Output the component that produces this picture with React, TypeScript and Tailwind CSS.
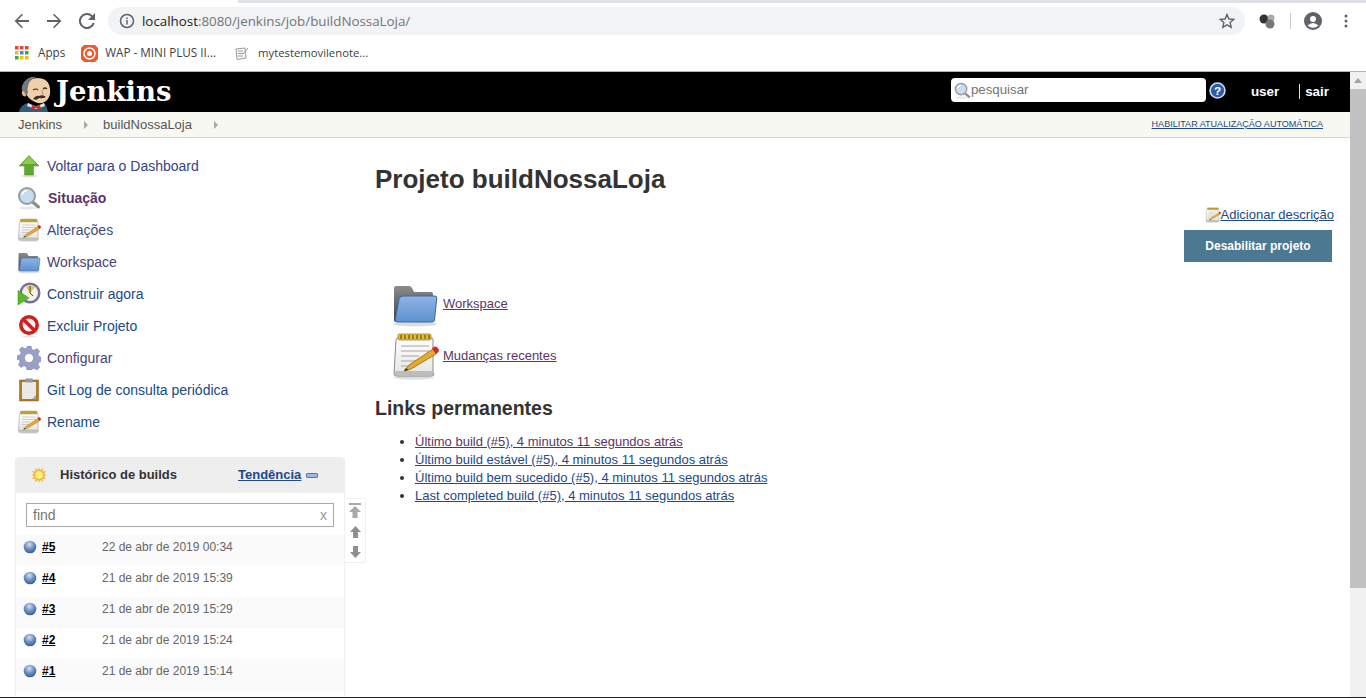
import React from "react";

const Back = ({ flip = false }: { flip?: boolean }) => (
  <svg width="16" height="16" viewBox="0 0 16 16" className={flip ? "-scale-x-100" : ""}>
    <path d="M15 7H3.800l5.200-5.200L7.900.7 0.600 8l7.300 7.300 1.100-1.100L3.800 9H15z" fill="#5f6368" />
  </svg>
);

const Folder = ({ s }: { s: number }) => (
  <svg width={s} height={s} viewBox="0 0 48 48">
    <defs>
      <linearGradient id={`fb${s}`} x1="0" y1="0" x2="0" y2="1"><stop offset="0" stopColor="#8db4e4" /><stop offset="1" stopColor="#5f90cf" /></linearGradient>
      <linearGradient id={`fg${s}`} x1="0" y1="0" x2="0" y2="1"><stop offset="0" stopColor="#8c8c8c" /><stop offset="1" stopColor="#3f3f3f" /></linearGradient>
    </defs>
    <ellipse cx="24" cy="44" rx="22" ry="2.500" fill="#00000022" />
    <path d="M3 8q0-2 2-2h13q2 0 3 2l2 4h17q2 0 2 2v4H12L8 42H5q-2 0-2-2z" fill={`url(#fg${s})`} />
    <path d="M12 16h32q2 0 1.800 2l-2.300 22q-.2 2-2 2H6q-2 0-1.800-2L8 19q.5-3 4-3z" fill={`url(#fb${s})`} stroke="#3a66a5" strokeWidth="1" />
  </svg>
);

const Notepad = ({ s }: { s: number }) => (
  <svg width={s} height={s} viewBox="0 0 48 48">
    <defs>
      <linearGradient id={`np${s}`} x1="0" y1="0" x2="0" y2="1"><stop offset="0" stopColor="#ffffff" /><stop offset="1" stopColor="#e4e4e0" /></linearGradient>
    </defs>
    <ellipse cx="23" cy="45.500" rx="20" ry="2" fill="#00000022" />
    <path d="M5 8q0-2 2-2h33q2 0 2 2v32l1 2q0 2-3 2H6q-3 0-3-2z" fill={`url(#np${s})`} stroke="#8a8a8a" />
    <rect x="3.500" y="39" width="39" height="4.500" rx="2" fill="#bdbdbd" />
    <rect x="7" y="2" width="33" height="6" rx="1.500" fill="#e0bd3c" stroke="#8f7a1e" strokeWidth=".7" />
    <path d="M10 3v4M14 3v4M18 3v4M22 3v4M26 3v4M30 3v4M34 3v4M38 3v4" stroke="#6c5a10" strokeWidth="1.200" />
    <path d="M10 14h28M10 19h28M10 24h18M10 29h20M10 34h10" stroke="#a4a4a4" strokeWidth="1" />
    <path d="M18 33l-5 6 7-2 25-15-3-5z" fill="#e9a92e" stroke="#8f6410" strokeWidth=".8" />
    <path d="M13 39l2-3 2.500 2z" fill="#333" />
    <path d="M41 16l4 6 2-1.500q1.500-2 .5-3.500-1.500-3-3.500-2.500z" fill="#d5262a" />
  </svg>
);

const Search = ({ s }: { s: number }) => (
  <svg width={s} height={s} viewBox="0 0 24 24">
    <ellipse cx="11" cy="22" rx="9" ry="1.500" fill="#00000018" />
    <path d="M15 15.500l6.500 5.500" stroke="#8a8a8a" strokeWidth="3" strokeLinecap="round" />
    <circle cx="10" cy="10" r="8" fill="#c6dcf1" stroke="#9c9c9c" strokeWidth="2" />
    <path d="M5 9q1-4 5-4.500" stroke="#fff" strokeWidth="1.500" fill="none" />
  </svg>
);

const Ball = () => (
  <svg width="14" height="14" viewBox="0 0 14 14">
    <defs>
      <radialGradient id="ball" cx=".45" cy=".3" r=".8"><stop offset="0" stopColor="#d5dfee" /><stop offset=".45" stopColor="#6f93c4" /><stop offset="1" stopColor="#234c8a" /></radialGradient>
    </defs>
    <circle cx="7" cy="7" r="6.300" fill="url(#ball)" />
  </svg>
);

const Butler = () => (
  <svg className="ml-[18px] self-end" width="36" height="37" viewBox="0 0 36 37">
    <path d="M1 37q1-7 9-9l8 3 8-3q3 3 4 9z" fill="#335c74" />
    <path d="M10 28l8 4 8-4 1 3-9 3-9-3z" fill="#e6e6e6" />
    <path d="M14 30l4 2 4-2 1 5-5-2-5 2z" fill="#d02d20" />
    <path d="M7 17Q6 4 19 3q12 0 13 11 1 8-4 12-5 4-11 1-7-3-10-10z" fill="#f0d0aa" />
    <path d="M7 22Q1 14 6 7q5-6 12-5-7 3-8 9-1 4 0 7z" fill="#777" />
    <path d="M6 16q-3 0-2 3t4 2z" fill="#e8b890" />
    <path d="M15 15q3-2 5 0M25 14q2-2 4 0" stroke="#332" strokeWidth="1.200" fill="none" />
    <path d="M15 24q4 2 6-1 4 1 7-1-3-3-7-1-3-1-6 3z" fill="#3a3028" />
    <path d="M24 15l1 5" stroke="#b98f6a" strokeWidth="1" />
  </svg>
);

const Icon = ({ name }: { name: string }) => {
  switch (name) {
    case "up":
      return (
        <svg width="24" height="24" viewBox="0 0 24 24">
          <ellipse cx="12" cy="22" rx="8" ry="1.500" fill="#00000020" />
          <path d="M12 1.500L22 12h-5.500v9h-9v-9H2z" fill="#5da82e" stroke="#4b9626" strokeWidth=".5" />
          <path d="M12 2L5 10h14z" fill="#8ccb4e" />
        </svg>
      );
    case "search":
      return <Search s={24} />;
    case "notepad":
      return <Notepad s={24} />;
    case "folder":
      return <Folder s={24} />;
    case "build":
      return (
        <svg width="24" height="24" viewBox="0 0 24 24">
          <circle cx="13" cy="11" r="10.500" fill="#75719a" />
          <circle cx="13" cy="11" r="8" fill="#f2f1e8" />
          <path d="M13 3.500l5 1.500-5 6-4-6z" fill="#e6c44c" />
          <path d="M13 4v7l3 3" stroke="#444" strokeWidth="1" fill="none" />
          <path d="M1 8.500l11 7.500-11 7z" fill="#5cb82a" stroke="#3e8f16" strokeWidth=".5" />
        </svg>
      );
    case "delete":
      return (
        <svg width="24" height="24" viewBox="0 0 24 24">
          <ellipse cx="12" cy="22.500" rx="7" ry="1" fill="#00000018" />
          <circle cx="12" cy="11" r="8.200" fill="#f2f2f2" stroke="#cf2020" strokeWidth="3.600" />
          <path d="M6 5l12 12" stroke="#cf2020" strokeWidth="3.600" />
        </svg>
      );
    case "gear":
      return (
        <svg width="24" height="24" viewBox="0 0 24 24">
          <path d="M10 0h4l.7 3.300 2.400 1 2.900-1.800 2.700 2.800-1.800 2.800 1 2.500 3.100.8v3.800l-3.100.8-1 2.500 1.800 2.800-2.700 2.800-2.900-1.800-2.400 1L14 24h-4l-.7-3.300-2.400-1-2.900 1.800-2.700-2.800 1.800-2.800-1-2.500L0 13.600V9.800l3.100-.8 1-2.500-1.800-2.800L5 .9l2.900 1.800 2.400-1z" fill="#9a9fc8" stroke="#777ba0" strokeWidth=".5" />
          <circle cx="12" cy="12" r="4.500" fill="#fff" stroke="#777ba0" strokeWidth=".5" />
        </svg>
      );
    case "clip":
      return (
        <svg width="24" height="24" viewBox="0 0 24 24">
          <rect x="2.500" y="2" width="19" height="21" fill="#b07a2c" stroke="#8c5e1c" strokeWidth=".5" />
          <rect x="5" y="4" width="14" height="17" fill="#e9e9e6" />
          <rect x="8" y="0.500" width="8" height="4" rx="1" fill="#9a9a9a" />
          <path d="M15 21l4-4v4z" fill="#a8a8a8" />
        </svg>
      );
    default:
      return null;
  }
};

const navItems = [
  { i: "up", t: "Voltar para o Dashboard", c: "ml-[6px] text-[#37447e]" },
  { i: "search", t: "Situação", c: "ml-[7px] text-[#5c3566] font-bold" },
  { i: "notepad", t: "Alterações", c: "ml-[6px] text-[#3c4a80]" },
  { i: "folder", t: "Workspace", c: "ml-[6px] text-[#4a3f74]" },
  { i: "build", t: "Construir agora", c: "ml-[6px] text-[#204a87]" },
  { i: "delete", t: "Excluir Projeto", c: "ml-[6px] text-[#204a87]" },
  { i: "gear", t: "Configurar", c: "ml-[6px] text-[#4a3f74]" },
  { i: "clip", t: "Git Log de consulta periódica", c: "ml-[6px] text-[#204a87]" },
  { i: "notepad", t: "Rename", c: "ml-[6px] text-[#204a87]" },
];

const builds = [
  ["#5", "22 de abr de 2019 00:34"],
  ["#4", "21 de abr de 2019 15:39"],
  ["#3", "21 de abr de 2019 15:29"],
  ["#2", "21 de abr de 2019 15:24"],
  ["#1", "21 de abr de 2019 15:14"],
];

const perma = [
  { t: "Último build (#5), 4 minutos 11 segundos atrás", c: "text-[#5c3566]" },
  { t: "Último build estável (#5), 4 minutos 11 segundos atrás", c: "text-[#204a87]" },
  { t: "Último build bem sucedido (#5), 4 minutos 11 segundos atrás", c: "text-[#204a87]" },
  { t: "Last completed build (#5), 4 minutos 11 segundos atrás", c: "text-[#204a87]" },
];

export default function App() {
  return (
    <div className="h-[698px] w-[1366px] overflow-hidden bg-white flex flex-col font-['Liberation_Sans',Arial,sans-serif] text-[14px] text-[#333]">
      {/* Browser chrome */}
      <div className="h-[3px] shrink-0 bg-white flex">
        <div className="w-[238px]" />
        <div className="flex-1 bg-[#dee1e6]" />
      </div>
      <div className="h-[36px] shrink-0 flex items-center pl-[14px] pr-[13px] font-['Open_Sans',sans-serif]">
        <Back />
        <div className="ml-[16px]"><Back flip /></div>
        <svg className="ml-[17px]" width="16" height="16" viewBox="0 0 16 16">
          <path d="M13.600 2.400A8 8 0 1 0 15.700 10h-2.100A6 6 0 1 1 12.200 3.800L9 7h7V0z" fill="#5f6368" />
        </svg>
        <div className="ml-[13px] w-[1137px] h-[28px] rounded-full bg-[#f1f3f4] flex items-center pl-[11px] pr-[10px]">
          <svg width="16" height="16" viewBox="0 0 16 16">
            <circle cx="8" cy="8" r="6.500" fill="none" stroke="#5f6368" strokeWidth="1.500" />
            <path d="M8 7v4.500M8 4.500v1.500" stroke="#5f6368" strokeWidth="1.500" />
          </svg>
          <span className="ml-[7px] text-[13.350px] text-[#202124]">localhost<span className="text-[#70757a]">:8080/jenkins/job/buildNossaLoja/</span></span>
          <svg className="ml-auto" width="16" height="16" viewBox="0 0 16 16">
            <path d="M8 1.500l1.900 4.500 4.800.4-3.600 3.200 1.100 4.700L8 11.800l-4.200 2.500 1.100-4.700-3.600-3.200 4.800-.4z" fill="none" stroke="#5f6368" strokeWidth="1.400" />
          </svg>
        </div>
        <svg className="ml-[14px]" width="18" height="16" viewBox="0 0 18 16">
          <circle cx="5" cy="6" r="4.500" fill="#333" />
          <circle cx="12" cy="5" r="3.500" fill="#aaa" />
          <circle cx="11" cy="11" r="4.500" fill="#777" />
        </svg>
        <div className="ml-[13px] w-px h-[16px] bg-[#c8cacd]" />
        <svg className="ml-[13px]" width="18" height="18" viewBox="0 0 18 18">
          <circle cx="9" cy="9" r="9" fill="#5f6368" />
          <circle cx="9" cy="7" r="3" fill="#fff" />
          <path d="M3.500 13.500q5.500-5 11 0Q9 18 3.500 13.500z" fill="#fff" />
        </svg>
        <svg className="ml-[22px]" width="4" height="14" viewBox="0 0 4 14">
          <circle cx="2" cy="2" r="1.500" fill="#5f6368" />
          <circle cx="2" cy="7" r="1.500" fill="#5f6368" />
          <circle cx="2" cy="12" r="1.500" fill="#5f6368" />
        </svg>
      </div>
      <div className="h-[32px] shrink-0 flex items-center pb-[4px] pl-[15px] text-[11.700px] text-[#3c4043] font-['Open_Sans',sans-serif]">
        <svg width="14" height="14" viewBox="0 0 14 14">
          <rect x="0" y="0" width="3.500" height="3.500" fill="#ea4335" /><rect x="5" y="0" width="3.500" height="3.500" fill="#ea4335" />
          <rect x="10" y="0" width="3.500" height="3.500" fill="#ea4335" />
          <rect x="0" y="5" width="3.500" height="3.500" fill="#fbbc04" /><rect x="5" y="5" width="3.500" height="3.500" fill="#4285f4" /><rect x="10" y="5" width="3.500" height="3.500" fill="#34a853" />
          <rect x="0" y="10" width="3.500" height="3.500" fill="#34a853" /><rect x="5" y="10" width="3.500" height="3.500" fill="#fbbc04" /><rect x="10" y="10" width="3.500" height="3.500" fill="#fbbc04" />
        </svg>
        <span className="ml-[9px]">Apps</span>
        <svg className="ml-[16px]" width="17" height="17" viewBox="0 0 17 17">
          <path d="M3 0h11l3 3v11l-3 3H3l-3-3V3z" fill="#f1592a" />
          <circle cx="8.500" cy="8.500" r="5.500" fill="none" stroke="#fff" strokeWidth="1.500" />
          <circle cx="8.500" cy="8.500" r="2.500" fill="#fff" />
        </svg>
        <span className="ml-[7px]">WAP - MINI PLUS II...</span>
        <svg className="ml-[19px]" width="15" height="15" viewBox="0 0 15 15">
          <path d="M1 3l9-1 1 10-9 1.500z" fill="#fafafa" stroke="#9a9a9a" />
          <path d="M3 5h5M3 7.500h5M3 10h5M8 8l5-6" stroke="#9a9a9a" />
        </svg>
        <span className="ml-[8px] text-[11.300px]">mytestemovilenote...</span>
      </div>

      <div className="flex-1 min-h-0 flex border-t border-[#b4b4b4] border-b border-b-[#222]">
        <div className="flex-1 min-w-0 flex flex-col">
          {/* Jenkins header */}
          <header className="h-[40px] shrink-0 bg-black flex items-center">
            <Butler />
            <span className="ml-[2px] font-['DejaVu_Serif',serif] font-bold text-[27.500px] text-white leading-none">Jenkins</span>
            <div className="ml-auto mb-[4px] w-[255px] h-[24px] rounded-[4px] bg-white flex items-center pl-[3px]">
              <Search s={17} />
              <span className="text-[13.300px] text-[#757575]">pesquisar</span>
            </div>
            <svg className="ml-[3px] mb-[3px]" width="17" height="17" viewBox="0 0 16 16">
              <circle cx="8" cy="8" r="7" fill="#2a5fa8" stroke="#cfe0f5" strokeWidth="1.500" />
              <text x="8" y="12" textAnchor="middle" fontSize="11" fontWeight="bold" fill="#fff" fontFamily="Liberation Sans">?</text>
            </svg>
            <span className="ml-[25px] font-bold text-[13.400px] text-white">user</span>
            <span className="ml-[20px] mr-[21px] font-bold text-[13.400px] text-white"><span className="border-l border-[#dcdcff] pl-[5px]">sair</span></span>
          </header>
          {/* Breadcrumbs */}
          <div className="h-[26px] shrink-0 bg-[#f6f8f1] border-b border-[#d3d7cf] flex items-center pl-[18px] text-[13px] text-[#555]">
            <span>Jenkins</span>
            <span className="ml-[22px] w-0 h-0 border-y-[4px] border-y-transparent border-l-[4px] border-l-[#a8a8a8]" />
            <span className="ml-[15px]">buildNossaLoja</span>
            <span className="ml-[22px] w-0 h-0 border-y-[4px] border-y-transparent border-l-[4px] border-l-[#a8a8a8]" />
            <span className="ml-auto mr-[27px] mt-[1px] text-[9.050px] underline text-[#204a87]">HABILITAR ATUALIZAÇÃO AUTOMÁTICA</span>
          </div>
          {/* Body */}
          <div className="flex-1 min-h-0 flex">
            <aside className="w-[375px] shrink-0 flex flex-col pt-[12px]">
              <nav className="flex flex-col">
                {navItems.map((n) => (
                  <div key={n.t + n.i} className="h-[32px] flex items-center pl-[17px]">
                    <Icon name={n.i} />
                    <span className={n.c}>{n.t}</span>
                  </div>
                ))}
              </nav>
              <div className="ml-[15px] mt-[19px] w-[330px] relative flex-1 border-x border-[#f0f0f0] rounded-t-[4px]">
                <div className="h-[36px] bg-[#eeeeee] rounded-t-[4px] flex items-center pl-[15px]">
                  <svg width="16" height="16" viewBox="0 0 16 16">
                    <path d="M8 0l1 3 3-2-.5 3.500L15 4l-2 3 3 1-3 1 2 3-3.500-.5.500 3.500-3-2-1 3-1-3-3 2 .5-3.500L1 12l2-3-3-1 3-1-2-3 3.500.5L4 1l3 2z" fill="#f6b44b" />
                    <circle cx="8" cy="8" r="3.800" fill="#fff07a" />
                  </svg>
                  <span className="ml-[13px] font-bold text-[#333] text-[13px]">Histórico de builds</span>
                  <span className="ml-[61px] font-bold text-[13px] text-[#204a87] underline">Tendência</span>
                  <span className="ml-[5px] w-[12px] h-[5px] rounded-[1px] bg-[#9db9dc] border border-[#4f7fb8]" />
                </div>
                <div className="mx-[10px] mt-[10px] h-[24px] border border-[#a9a9a9] flex items-center justify-between px-[6px] text-[#757575]">
                  <span>find</span>
                  <span className="text-[#999]">x</span>
                </div>
                <div className="mt-[8px] flex flex-col">
                  {builds.map(([n, d], i) => (
                    <div key={n} className={"h-[31px] flex items-center pb-[8px] pl-[7px] " + (i % 2 === 0 ? "bg-[#fafafa]" : "bg-white")}>
                      <Ball />
                      <span className="ml-[5px] w-[60px] font-bold text-[12px] text-black underline">{n}</span>
                      <span className="text-[12px] text-[#666]">{d}</span>
                    </div>
                  ))}
                </div>
                <div className="absolute left-[329px] top-[41px] w-[21px] h-[65px] bg-white border border-[#f0f0f0] border-l-0 rounded-r-[3px] flex flex-col items-center pt-[4px]">
                  <svg width="12" height="15" viewBox="0 0 12 15"><path d="M0 0h12v2H0zM6 3l6 6H8.500v6h-5V9H0z" fill="#a9a9a9" /></svg>
                  <svg className="mt-[8px]" width="11" height="12" viewBox="0 0 11 12"><path d="M5.500 0L11 6H8v6H3V6H0z" fill="#8f8f8f" /></svg>
                  <svg className="mt-[8px]" width="11" height="12" viewBox="0 0 11 12"><path d="M5.500 12L11 6H8V0H3v6H0z" fill="#8f8f8f" /></svg>
                </div>
              </div>
            </aside>
            <main className="flex-1 min-w-0 flex flex-col pr-[16px]">
              <h1 className="mt-[27px] text-[26px] leading-[29px] font-bold text-[#333]">Projeto buildNossaLoja</h1>
              <div className="mt-[11px] self-end flex items-center text-[13px] text-[#204a87] underline">
                <Notepad s={16} />
                <span>Adicionar descrição</span>
              </div>
              <button className="mt-[5px] mr-[2px] self-end w-[148px] h-[32px] bg-[#4d7891] text-white font-bold text-[12px]">Desabilitar projeto</button>
              <div className="mt-[18px] ml-[16px] h-[48px] flex items-center">
                <Folder s={48} />
                <span className="ml-[4px] text-[#5c3566] underline text-[13px]">Workspace</span>
              </div>
              <div className="mt-[4px] ml-[16px] h-[48px] flex items-center">
                <Notepad s={48} />
                <span className="ml-[4px] text-[#5c3566] underline text-[13px]">Mudanças recentes</span>
              </div>
              <h2 className="mt-[16px] text-[19.500px] leading-[24px] font-bold text-[#333]">Links permanentes</h2>
              <ul className="mt-[13px] pl-[40px] list-disc text-[13px] leading-[18px]">
                {perma.map((p) => (
                  <li key={p.t}><span className={"underline " + p.c}>{p.t}</span></li>
                ))}
              </ul>
            </main>
          </div>
        </div>
        {/* Scrollbar */}
        <div className="w-[16px] shrink-0 bg-[#f1f1f1] flex flex-col items-center">
          <div className="h-[17px] flex items-center">
            <span className="w-0 h-0 border-x-[4px] border-x-transparent border-b-[5px] border-b-[#a3a3a3]" />
          </div>
          <div className="w-full h-[499px] bg-[#c1c1c1]" />
        </div>
      </div>
    </div>
  );
}
